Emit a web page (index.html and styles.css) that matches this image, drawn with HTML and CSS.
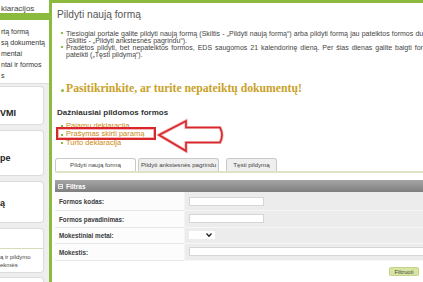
FILE: index.html
```html
<!DOCTYPE html>
<html lang="lt">
<head>
  <meta charset="UTF-8">
  <title>Pildyti naują formą</title>
  <link rel="stylesheet" href="styles.css">
</head>
<body>
<div class="page">
  <div class="sidebar">
    <div class="menu">
      <div class="menu-top">klaracijos</div>
      <div class="menu-head"></div>
      <ul class="menu-list">
        <li>rtą formą</li>
        <li>są dokumentą</li>
        <li>mentai</li>
        <li>ntai ir formos</li>
        <li>s</li>
      </ul>
    </div>
    <div class="side-box box-vmi"><b>VMI</b></div>
    <div class="side-box box-pe"><b>pe</b></div>
    <div class="side-box box-a"><b>ą</b></div>
    <div class="side-box box-info"><p>ą ir pildymo<br>ekmės</p></div>
    <div class="side-box box-last"></div>
  </div>

  <div class="main">
    <h1>Pildyti naują formą</h1>
    <ul class="intro">
      <li>Tiesiogiai portale galite pildyti naują formą (Skiltis - „Pildyti naują formą“) arba pildyti formą jau pateiktos formos duomenų pagrindu (Skiltis - „Pildyti ankstesnės pagrindu“).</li>
      <li>Pradėtos pildyti, bet nepateiktos formos, EDS saugomos 21 kalendorinę dieną. Per šias dienas galite baigti formų užpildymą ir pateikti („Tęsti pildymą“).</li>
    </ul>

    <p class="notice"><a href="#">Pasitikrinkite, ar turite nepateiktų dokumentų!</a></p>

    <h2>Dažniausiai pildomos formos</h2>
    <ul class="forms">
      <li><a href="#">Pajamų deklaracija</a></li>
      <li><a href="#">Prašymas skirti paramą</a></li>
      <li><a href="#">Turto deklaracija</a></li>
      <!-- annotation drawn over the list -->
      <span class="mark-box"></span>
      <svg class="mark-arrow" width="70" height="40" viewBox="0 0 70 40">
        <path d="M2 19 L29 5 L29 11.5 L63 11.5 Q67 19 63 26.5 L29 26.5 L29 35 Z" fill="none" stroke="#f2b4b4" stroke-width="3.2"/>
        <path d="M2 19 L29 5 L29 11.5 L63 11.5 Q67 19 63 26.5 L29 26.5 L29 35 Z" fill="none" stroke="#d8262b" stroke-width="1.6"/>
      </svg>
    </ul>

    <div class="tabs">
      <span class="tab active">Pildyti naują formą</span>
      <span class="tab">Pildyti ankstesnės pagrindu</span>
      <span class="tab last">Tęsti pildymą</span>
    </div>

    <div class="filter">
      <div class="filter-head"><span class="toggle"></span>Filtras</div>
      <div class="filter-row first">
        <label>Formos kodas:</label>
        <div class="cell"><input type="text"></div>
      </div>
      <div class="filter-row">
        <label>Formos pavadinimas:</label>
        <div class="cell"><input type="text"></div>
      </div>
      <div class="filter-row">
        <label>Mokestiniai metai:</label>
        <div class="cell">
          <span class="select">
            <svg width="6" height="4" viewBox="0 0 6 4"><path d="M0.5 0.5 L3 3.3 L5.5 0.5" fill="none" stroke="#222" stroke-width="1.3"/></svg>
          </span>
        </div>
      </div>
      <div class="filter-row">
        <label>Mokestis:</label>
        <div class="cell"><input type="text" class="wide"></div>
      </div>
      <div class="filter-foot"><button>Filtruoti</button></div>
    </div>
  </div>
</div>
</body>
</html>
```

FILE: styles.css
```css
body {
  margin: 0;
  font-family: 'Liberation Sans', Arial, sans-serif;
  color: #333;
  background-color: #fff;
  overflow: hidden;
}
.page {
  display: flex;
  align-items: flex-start;
}

/* left column */
.sidebar {
  width: 49px;
  flex: none;
  height: 282px;
  background-color: #eeeeee;
  overflow: hidden;
}
.menu {
  background-color: #fff;
  height: 84px;
  border-bottom: 1px solid #dedede;
  box-sizing: border-box;
}
.menu-top {
  height: 13px;
  padding: 4px 0 0 1px;
  box-sizing: border-box;
  font-size: 8px;
  line-height: 9px;
  color: #444;
}
.menu-head {
  height: 7px;
  background-color: #8cba3e;
}
.menu-list {
  list-style: none;
  margin: 0;
  padding: 6px 0 0 1px;
  font-size: 7px;
  line-height: 11px;
  color: #333;
  white-space: nowrap;
}
.side-box {
  width: 44px;
  margin-top: 5px;
  background-color: #fff;
  border: 1px solid #dcdcdc;
  border-left: none;
  border-radius: 0 4px 4px 0;
  box-sizing: border-box;
  font-size: 9px;
  line-height: 10px;
  color: #222;
  white-space: nowrap;
}
.box-vmi {
  margin-top: 2px;
  height: 39px;
  padding-top: 21px;
}
.box-pe {
  height: 46px;
  padding-top: 22px;
}
.box-a {
  height: 42px;
  padding-top: 16px;
}
.box-info {
  height: 45px;
  padding-top: 19px;
}
.box-info p {
  margin: 0;
  border-top: 1px solid #d9dcbc;
  padding-top: 4px;
  font-size: 6px;
  line-height: 8px;
  color: #444;
}
.box-last {
  margin-top: 4px;
  height: 30px;
}

/* content */
.main {
  flex: none;
  width: 419px;
  min-height: 282px;
  padding: 0 6px 0 3px;
  border-top: 3px solid #8cba3e;
  border-left: 3px solid #8cba3e;
  box-sizing: content-box;
}
h1 {
  margin: 6px 0 0 2px;
  font-size: 10.2px;
  line-height: 12px;
  font-weight: normal;
  color: #555;
}
.intro {
  list-style: none;
  margin: 8.5px 0 0 0;
  padding: 0 0 0 11px;
  font-size: 7px;
  line-height: 7px;
  color: #444;
  text-align: justify;
}
.intro li {
  display: flex;
}
.intro li::before,
.forms li::before {
  content: "";
  flex: none;
  width: 2px;
  height: 2px;
  margin: 2.5px 3px 0 -5px;
  background-color: #8cba3e;
}
.notice {
  margin: 24px 0 0 6px;
  display: flex;
  align-items: center;
  gap: 2px;
  font-family: 'Liberation Serif', 'Times New Roman', serif;
  font-size: 11.7px;
  line-height: 14px;
  font-weight: bold;
}
.notice::before {
  content: "";
  width: 3px;
  height: 3px;
  border-radius: 50%;
  background-color: #8cba3e;
  margin-top: 3px;
}
.notice a {
  color: #c9a128;
  text-decoration: none;
}
h2 {
  margin: 12px 0 0 2px;
  font-size: 8px;
  line-height: 10px;
  color: #333;
}
.forms {
  position: relative;
  list-style: none;
  margin: 4px 0 0 0;
  padding: 0 0 0 11px;
  font-size: 7.5px;
  line-height: 8.5px;
}
.forms li {
  display: flex;
}
.forms li::before {
  margin-top: 3.5px;
}
.forms a {
  color: #cc8a14;
  text-decoration: none;
}
.mark-box {
  position: absolute;
  left: 1px;
  top: 5px;
  width: 100px;
  height: 13px;
  border: 2px solid #d8262b;
  box-shadow: inset 0 0 0 1px #f2b4b4;
  box-sizing: border-box;
}
.mark-arrow {
  position: absolute;
  left: 102px;
  top: -6px;
}

/* tabs */
.tabs {
  display: flex;
  gap: 2px;
  margin-top: 11px;
  border-bottom: 2px solid #dfe3c6;
}
.tab {
  height: 13px;
  padding: 0 2px;
  border: 1px solid #c9c9c9;
  border-bottom: none;
  border-radius: 3px 3px 0 0;
  background-color: #efefef;
  box-sizing: border-box;
  font-size: 6.2px;
  line-height: 12px;
  color: #444;
  white-space: nowrap;
}
.tab.active {
  padding: 0 14px;
  background-color: #fff;
}
.tab.last {
  margin-left: 5px;
  padding: 0 6px;
}

/* filter form */
.filter {
  width: 368px;
  margin-top: 7px;
}
.filter-head {
  display: flex;
  align-items: center;
  height: 12px;
  padding-left: 3px;
  background: linear-gradient(#a5a5a5, #7e7e7e);
  color: #fff;
  font-size: 6.5px;
  font-weight: bold;
}
.toggle {
  width: 5px;
  height: 5px;
  margin-right: 3px;
  border: 1px solid #e6e6e6;
  box-sizing: border-box;
  background: linear-gradient(#e6e6e6, #e6e6e6) center / 3px 1px no-repeat;
}
.filter-row {
  display: grid;
  grid-template-columns: 129px 1fr;
  height: 16.5px;
}
.filter-row.first {
  height: 19px;
}
.filter-row label {
  display: flex;
  align-items: center;
  padding: 1px 0 0 4px;
  background-color: #fcfcfc;
  border-bottom: 1px solid #e7e7e7;
  font-size: 6.3px;
  font-weight: bold;
  color: #3a3a3a;
}
.cell {
  display: flex;
  align-items: center;
  padding-left: 4px;
  background-color: #ececec;
  border-left: 1px solid #f4f4f4;
  border-bottom: 1px solid #f6f6f6;
}
.cell input {
  width: 75px;
  height: 9px;
  padding: 0;
  border: 1px solid #d6d6d6;
  background-color: #fff;
  box-sizing: border-box;
}
.cell input.wide {
  width: 240px;
}
.select {
  display: flex;
  align-items: center;
  justify-content: flex-end;
  width: 26px;
  height: 8px;
  padding-right: 3px;
  background-color: #fff;
  box-sizing: border-box;
}
.filter-foot {
  display: flex;
  justify-content: flex-end;
  align-items: center;
  height: 22px;
  padding-right: 4px;
  border-bottom: 1px solid #e2e2e2;
}
.filter-foot button {
  width: 30px;
  height: 9px;
  padding: 0;
  border: 1px solid #c3d38c;
  border-radius: 2px;
  background-color: #d8e6a4;
  font-family: 'Liberation Sans', Arial, sans-serif;
  font-size: 5.8px;
  color: #444;
}
```
